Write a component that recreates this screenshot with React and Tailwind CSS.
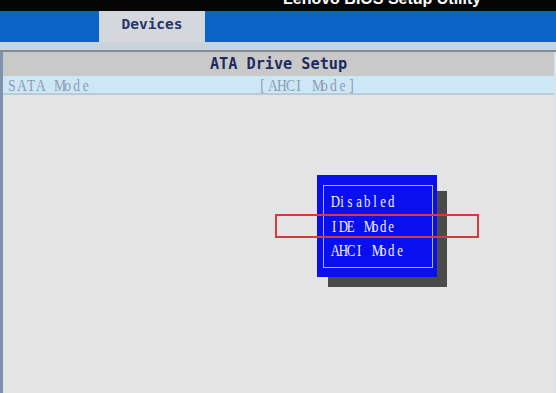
// BIOS text uses a narrow fixed-pitch serif; draw each character condensed in a fixed cell
function Mono({ text, cell }) {
  return (
    <span className="whitespace-nowrap">
      {text.split("").map((c, i) => (
        <span key={i} className={`inline-block scale-x-[0.8] text-center ${cell}`}>
          {c === " " ? "\u00a0" : c}
        </span>
      ))}
    </span>
  );
}

export default function App() {
  const options = ["Disabled", "IDE Mode", "AHCI Mode"];

  return (
    <div className="relative flex h-[393px] w-[556px] flex-col overflow-hidden bg-[#e4e4e4]">
      {/* title strip, text cut off by the top of the shot */}
      <div className="h-[11px] shrink-0 overflow-hidden bg-[#050505] pl-[283px]">
        <div className="mt-[-9px] whitespace-nowrap font-['Liberation_Sans',sans-serif] text-[16px] leading-4 font-bold text-white">
          Lenovo BIOS Setup Utility
        </div>
      </div>

      {/* menu bar */}
      <div className="flex h-[31px] shrink-0 bg-[#0b63c6] pl-[99px]">
        <div className="flex w-[106px] items-center justify-center bg-[#d4d8dc] pb-[3px] font-['DejaVu_Sans_Mono',monospace] text-[14.5px] font-bold text-[#27356a]">
          Devices
        </div>
      </div>
      <div className="h-[8px] shrink-0 bg-[#c8d3db]" />
      <div className="h-[2px] shrink-0 bg-[#7f8d99]" />

      {/* content */}
      <div className="flex flex-1 flex-col border-l-[3px] border-r-[2px] border-l-[#7c92ad] border-r-[#d6e4ee]">
        <div className="flex h-[24px] shrink-0 items-center justify-center bg-[#c9c9c9] font-['DejaVu_Sans_Mono',monospace] text-[15.2px] font-bold text-[#1d2b60]">
          ATA Drive Setup
        </div>
        <div className="flex h-[17px] shrink-0 items-center bg-[#cde7f7] pl-[4px] pt-[3px] font-['Liberation_Serif',serif] text-[17px] leading-4 text-[#8c9db0]">
          <span className="w-[251px]">
            <Mono text="SATA Mode" cell="w-[9.3px]" />
          </span>
          <Mono text="[AHCI Mode]" cell="w-[8.9px]" />
        </div>
        <div className="h-[2px] shrink-0 bg-[#b8ccd4]" />
        <div className="flex-1 bg-[#e4e4e4]" />
      </div>

      {/* popup shadow */}
      <div className="absolute left-[328px] top-[191px] h-[96px] w-[119px] bg-[#4b4b4b]" />
      {/* popup */}
      <div className="absolute left-[317px] top-[175px] h-[102px] w-[120px] bg-[#0a0ff0] pb-[9px] pl-[6px] pr-[4px] pt-[10px]">
        <div className="flex h-full flex-col border border-[#a9b4ff] pl-[6px] pt-[4px] font-['Liberation_Serif',serif] text-[16px] text-[#f2f2ff]">
          {options.map((o) => (
            <div key={o} className="h-[24.5px] leading-[24.5px]">
              <Mono text={o} cell="w-[8.2px]" />
            </div>
          ))}
        </div>
      </div>

      {/* red highlight */}
      <div className="absolute left-[275px] top-[214px] h-[24px] w-[204px] border-2 border-[#d23c3c]" />
    </div>
  );
}
